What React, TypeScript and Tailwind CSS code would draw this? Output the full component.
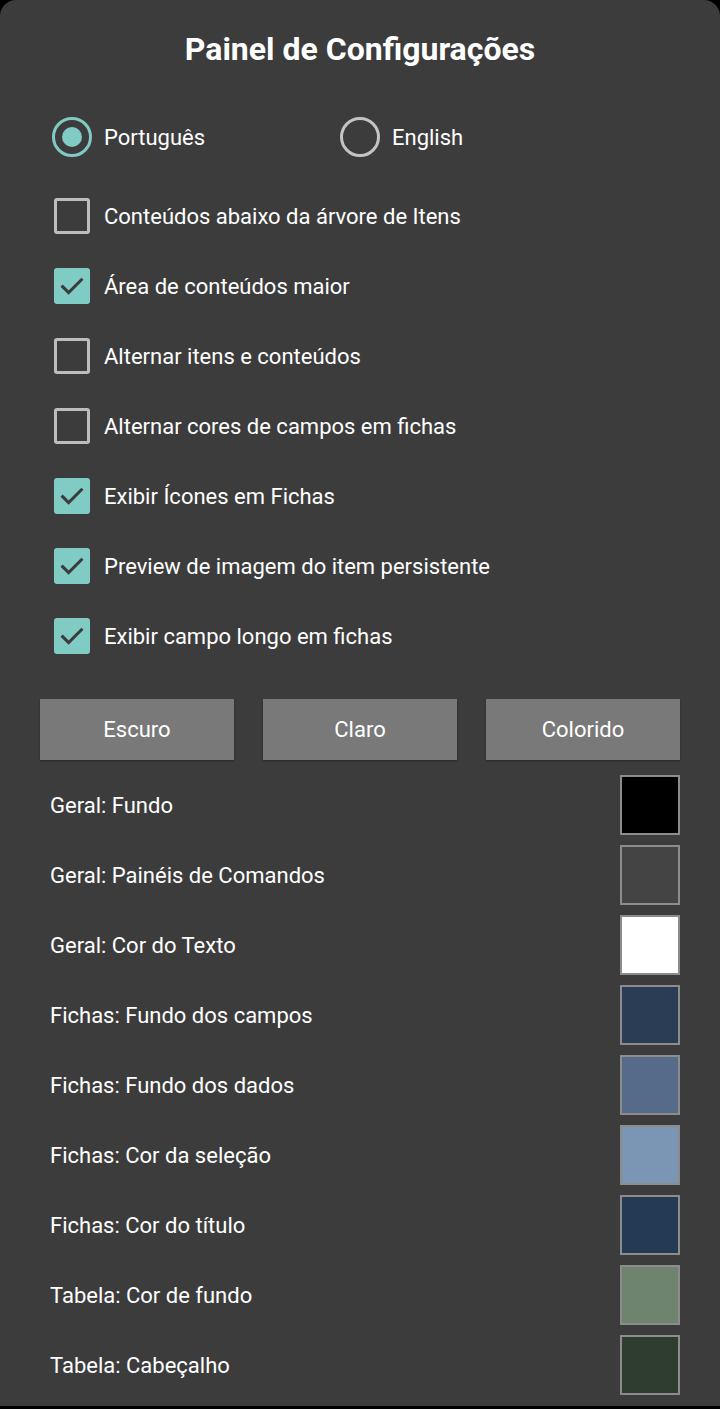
import React, { useState } from 'react';

const checks: { label: string; on: boolean }[] = [
  { label: 'Conteúdos abaixo da árvore de Itens', on: false },
  { label: 'Área de conteúdos maior', on: true },
  { label: 'Alternar itens e conteúdos', on: false },
  { label: 'Alternar cores de campos em fichas', on: false },
  { label: 'Exibir Ícones em Fichas', on: true },
  { label: 'Preview de imagem do item persistente', on: true },
  { label: 'Exibir campo longo em fichas', on: true },
];

const colors: { label: string; color: string }[] = [
  { label: 'Geral: Fundo', color: '#000000' },
  { label: 'Geral: Painéis de Comandos', color: '#444444' },
  { label: 'Geral: Cor do Texto', color: '#ffffff' },
  { label: 'Fichas: Fundo dos campos', color: '#2b3d55' },
  { label: 'Fichas: Fundo dos dados', color: '#566b89' },
  { label: 'Fichas: Cor da seleção', color: '#7b95b5' },
  { label: 'Fichas: Cor do título', color: '#253a54' },
  { label: 'Tabela: Cor de fundo', color: '#6e846f' },
  { label: 'Tabela: Cabeçalho', color: '#2f3d2f' },
];

const Radio = ({ on, label, onClick }: { on: boolean; label: string; onClick: () => void }) => (
  <button type="button" onClick={onClick} className="flex items-center gap-[12px] h-[40px]">
    <span
      className={
        on
          ? 'w-[40px] h-[40px] rounded-full border-[3.5px] border-[#80cbc4] flex items-center justify-center'
          : 'w-[40px] h-[40px] rounded-full border-[3.5px] border-[#c4c4c4] flex items-center justify-center'
      }
    >
      {on && <span className="w-[20px] h-[20px] rounded-full bg-[#80cbc4]" />}
    </span>
    <span className="text-[22px] text-white">{label}</span>
  </button>
);

export default function App() {
  const [lang, setLang] = useState('pt');
  const [opts, setOpts] = useState(checks.map(c => c.on));

  const toggle = (i: number) => setOpts(prev => prev.map((v, j) => (j === i ? !v : v)));

  return (
    <div className="w-[720px] h-[1409px] bg-black" style={{ fontFamily: 'Roboto, "Noto Sans", sans-serif' }}>
      <div className="w-[720px] h-[1406px] bg-[#3c3c3c] rounded-t-[16px] overflow-hidden">
        <div className="h-[98px] flex items-center justify-center">
          <h1 className="text-[32px] font-bold text-white">Painel de Configurações</h1>
        </div>

        <div className="mt-[19px] flex pl-[52px]">
          <div className="w-[288px]">
            <Radio on={lang === 'pt'} label="Português" onClick={() => setLang('pt')} />
          </div>
          <Radio on={lang === 'en'} label="English" onClick={() => setLang('en')} />
        </div>

        <div className="mt-[24px] pl-[54px]">
          {checks.map((c, i) => (
            <div key={c.label} className="h-[70px] flex items-center gap-[14px] cursor-pointer" onClick={() => toggle(i)}>
              {opts[i] ? (
                <span className="w-[36px] h-[36px] rounded-[3px] bg-[#80cbc4] flex items-center justify-center">
                  <svg width="30" height="30" viewBox="0 0 24 24" fill="none">
                    <path d="M4.5 12.5l4.8 4.8L19.5 7" stroke="#3c3c3c" strokeWidth="2.4" strokeLinecap="square" />
                  </svg>
                </span>
              ) : (
                <span className="w-[36px] h-[36px] rounded-[3px] border-[3px] border-[#bdbdbd]" />
              )}
              <span className="text-[22px] text-white">{c.label}</span>
            </div>
          ))}
        </div>

        <div className="mt-[28px] px-[40px] grid grid-cols-3 gap-[29px]">
          {['Escuro', 'Claro', 'Colorido'].map(b => (
            <button
              key={b}
              type="button"
              className="h-[61px] bg-[#797979] text-white text-[22px] shadow-[0_1px_2px_rgba(0,0,0,0.35)]"
            >
              {b}
            </button>
          ))}
        </div>

        <div className="mt-[10px] pl-[50px] pr-[40px]">
          {colors.map(c => (
            <div key={c.label} className="h-[70px] flex items-center justify-between">
              <span className="text-[22px] text-white">{c.label}</span>
              <span className="w-[60px] h-[60px] border-[2px] border-[#8c8c8c]" style={{ backgroundColor: c.color }} />
            </div>
          ))}
        </div>
      </div>
    </div>
  );
}
